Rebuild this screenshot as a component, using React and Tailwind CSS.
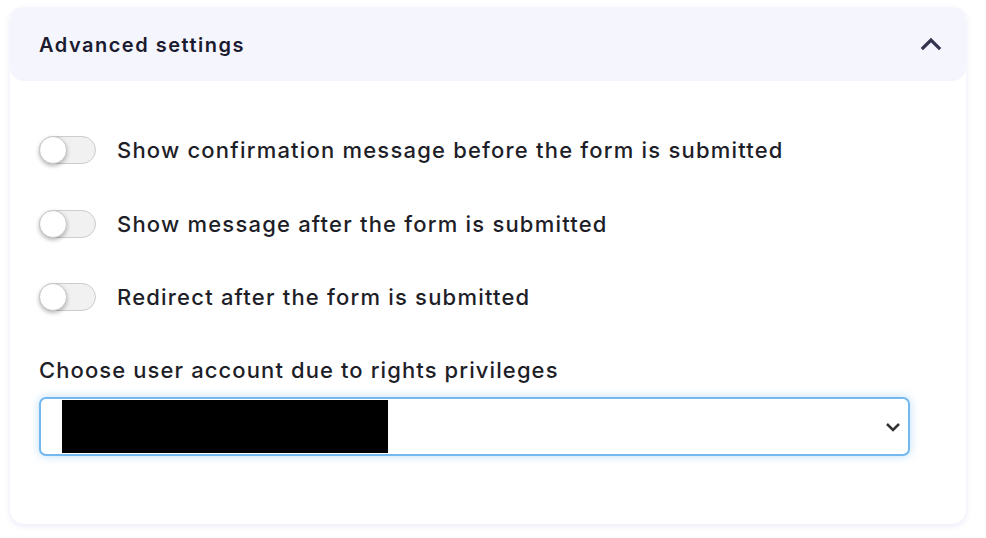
import React from "react";

function Toggle() {
  return (
    <div className="relative w-[57px] h-[28px] shrink-0">
      <div className="absolute inset-0 rounded-full bg-[#f1f1f1] border border-[#cdcdcd]" />
      <div className="absolute left-0 top-0 w-[28px] h-[28px] rounded-full bg-white border border-[#c8c8c8] shadow-[0_2px_4px_rgba(0,0,0,0.28)]" />
    </div>
  );
}

function Row({ label }) {
  return (
    <div className="flex items-center gap-[21px] h-[28px]">
      <Toggle />
      <span className="text-[22px] tracking-[1.2px] font-[550] text-[#1e1e28] leading-none">{label}</span>
    </div>
  );
}

export default function App() {
  return (
    <div className="w-[986px] h-[538px] bg-white pt-[7px] pl-[10px]" style={{ fontFamily: "Inter, 'Liberation Sans', sans-serif" }}>
      <div className="w-[956px] h-[517px] rounded-[14px] bg-white shadow-[0_2px_6px_rgba(120,110,200,0.15)] flex flex-col">
        <div className="h-[74px] rounded-[14px] bg-[#f5f5fe] flex items-center justify-between pl-[29px] pr-[24px]">
          <span className="text-[20px] tracking-[1.5px] font-semibold text-[#1b1b2f] leading-none pt-[2px]">Advanced settings</span>
          <svg width="22" height="14" viewBox="0 0 22 14" fill="none">
            <path d="M3 11 L11 3 L19 11" stroke="#34344f" strokeWidth="3.2" strokeLinecap="square" />
          </svg>
        </div>
        <div className="pl-[29px] pr-[56px] pt-[55px] flex flex-col">
          <div className="flex flex-col gap-[45.5px]">
            <Row label="Show confirmation message before the form is submitted" />
            <Row label="Show message after the form is submitted" />
            <Row label="Redirect after the form is submitted" />
          </div>
          <div className="mt-[48px] text-[22px] tracking-[1.1px] font-[550] text-[#1e1e28] leading-none">Choose user account due to rights privileges</div>
          <div className="mt-[16px] h-[59px] rounded-[7px] border-2 border-[#74b8f0] shadow-[0_0_10px_rgba(108,180,238,0.45)] bg-white flex items-center justify-between pl-[21px] pr-[7px]">
            <div className="w-[326px] h-[53px] bg-black" />
            <svg width="16" height="10" viewBox="0 0 16 10" fill="none">
              <path d="M2 2 L8 8 L14 2" stroke="#333" strokeWidth="2.5" />
            </svg>
          </div>
        </div>
      </div>
    </div>
  );
}
